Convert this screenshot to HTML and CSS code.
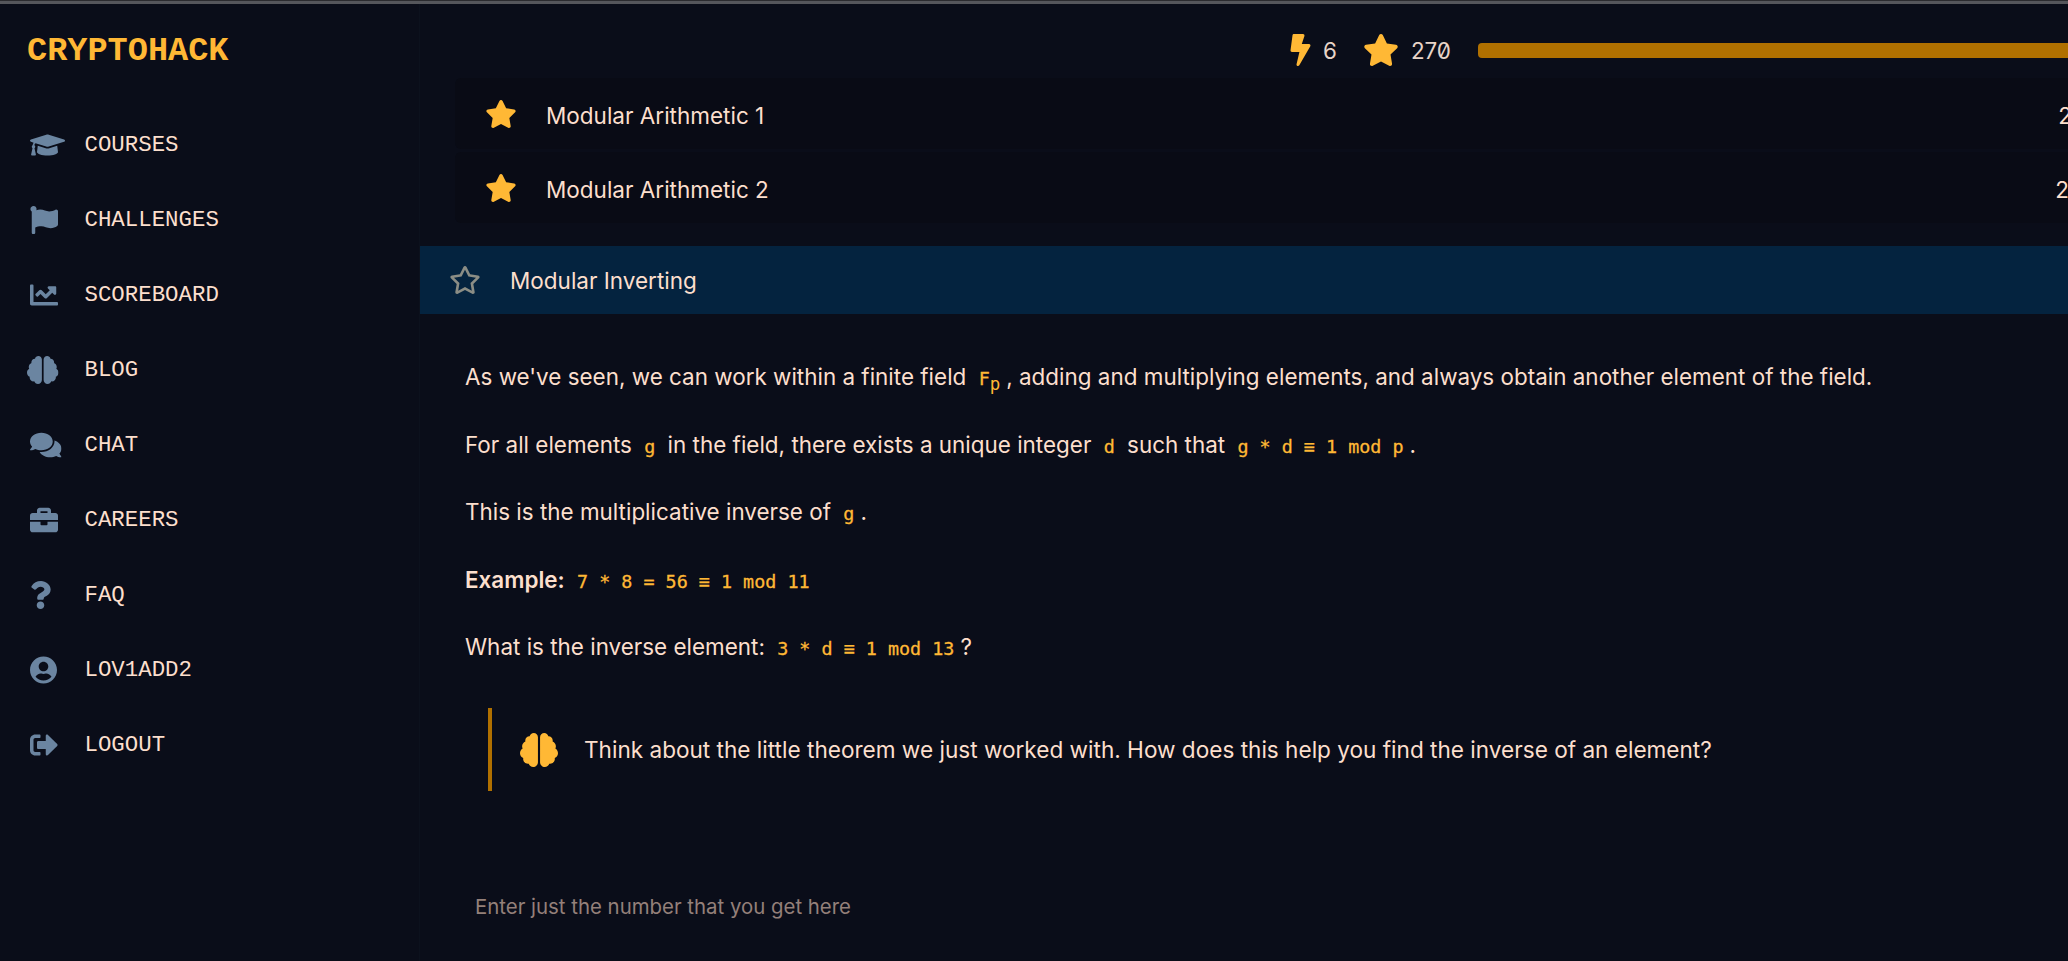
FILE: index.html
```html
<!DOCTYPE html>
<html lang="en">
<head>
<meta charset="utf-8">
<title>CryptoHack</title>
<link rel="stylesheet" href="styles.css">
</head>
<body>
<svg class="sprite" aria-hidden="true">
<symbol id="i-cap" viewBox="0 0 640 512"><path d="M622.34 153.2L343.4 67.5c-15.2-4.67-31.6-4.67-46.79 0L17.66 153.2c-23.54 7.23-23.54 38.36 0 45.59l48.63 14.94c-10.67 13.19-17.23 29.28-17.88 46.9C38.78 266.15 32 276.11 32 288c0 10.78 5.68 19.85 13.86 25.65L20.33 428.53C18.11 438.52 25.71 448 35.94 448h56.11c10.24 0 17.84-9.48 15.62-19.47L82.14 313.65C90.32 307.85 96 298.78 96 288c0-11.57-6.47-21.25-15.66-26.87.76-15.02 8.44-28.3 20.69-36.72L296.6 284.5c9.06 2.78 26.44 6.25 46.79 0l278.95-85.7c23.55-7.24 23.55-38.36 0-45.6zM352.79 315.09c-28.53 8.76-52.84 3.92-65.59 0l-145.02-44.55L128 384c0 35.35 85.96 64 192 64s192-28.65 192-64l-14.18-113.47-145.03 44.56z"/></symbol>
<symbol id="i-flag" viewBox="0 0 512 512"><path d="M349.565 98.783C295.978 98.783 251.721 64 184.348 64c-24.955 0-47.309 4.384-68.045 12.013a55.947 55.947 0 0 0 3.586-23.562C118.117 24.015 94.806 1.206 66.338.048 34.345-1.254 8 24.296 8 56c0 19.026 9.497 35.825 24 45.945V488c0 13.255 10.745 24 24 24h16c13.255 0 24-10.745 24-24v-94.4c28.311-12.064 63.582-22.122 114.435-22.122 53.588 0 97.844 34.783 165.217 34.783 48.169 0 86.667-16.294 122.505-40.858C506.84 359.452 512 349.571 512 339.045v-243.1c0-23.393-24.269-38.87-45.485-29.016-34.338 15.948-76.454 31.854-116.95 31.854z"/></symbol>
<symbol id="i-chart" viewBox="0 0 512 512"><path d="M496 384H64V80c0-8.84-7.16-16-16-16H16C7.16 64 0 71.16 0 80v336c0 17.67 14.33 32 32 32h464c8.84 0 16-7.16 16-16v-32c0-8.84-7.16-16-16-16zM464 96H345.94c-21.38 0-32.09 25.85-16.97 40.97l32.4 32.4L288 242.75l-73.37-73.37c-12.5-12.5-32.76-12.5-45.25 0l-68.69 68.69c-6.25 6.25-6.25 16.38 0 22.63l22.62 22.62c6.25 6.25 16.38 6.25 22.63 0L192 237.25l73.37 73.37c12.5 12.5 32.76 12.5 45.25 0l96-96 32.4 32.4c15.12 15.12 40.97 4.41 40.97-16.97V112c.01-8.84-7.15-16-15.99-16z"/></symbol>
<symbol id="i-brain" viewBox="0 0 576 512"><path d="M208 0c-29.9 0-54.7 20.5-61.8 48.2-.8 0-1.4-.2-2.2-.2-35.3 0-64 28.7-64 64 0 4.8.6 9.5 1.7 14C52.5 138 32 166.6 32 200c0 12.6 3.2 24.3 8.3 34.9C16.3 248.7 0 274.3 0 304c0 33.3 20.4 61.9 49.4 73.9-.9 4.6-1.4 9.3-1.4 14.1 0 39.8 32.2 72 72 72 4.1 0 8.1-.5 12-1.2 9.6 28.5 36.2 49.2 68 49.2 39.8 0 72-32.2 72-72V64c0-35.3-28.7-64-64-64zm368 304c0-29.7-16.3-55.3-40.3-69.1 5.2-10.6 8.3-22.3 8.3-34.9 0-33.4-20.5-62-49.7-74 1-4.5 1.7-9.2 1.7-14 0-35.3-28.7-64-64-64-.8 0-1.5.2-2.2.2C422.7 20.5 397.9 0 368 0c-35.3 0-64 28.6-64 64v376c0 39.8 32.2 72 72 72 31.8 0 58.4-20.7 68-49.2 3.9.7 7.9 1.2 12 1.2 39.8 0 72-32.2 72-72 0-4.8-.5-9.5-1.4-14.1 29-12 49.4-40.6 49.4-73.9z"/></symbol>
<symbol id="i-chat" viewBox="0 0 576 512"><path d="M416 192c0-88.4-93.1-160-208-160S0 103.6 0 192c0 34.3 14.1 65.9 38 92-13.4 30.2-35.5 54.2-35.8 54.5-2.2 2.3-2.8 5.7-1.5 8.7S4.8 352 8 352c36.6 0 66.9-12.3 88.7-25 32.2 15.7 70.3 25 111.3 25 114.9 0 208-71.6 208-160zm122 220c23.9-26 38-57.7 38-92 0-66.9-53.5-124.2-129.3-148.1.9 6.6 1.3 13.3 1.3 20.1 0 105.9-107.7 192-240 192-10.8 0-21.3-.8-31.7-1.9C207.8 439.6 281.8 480 368 480c41 0 79.1-9.2 111.3-25 21.8 12.7 52.1 25 88.7 25 3.2 0 6.1-1.9 7.3-4.8 1.3-2.9.7-6.3-1.5-8.7-.3-.3-22.4-24.2-35.8-54.5z"/></symbol>
<symbol id="i-case" viewBox="0 0 512 512"><path d="M320 336c0 8.84-7.16 16-16 16h-96c-8.84 0-16-7.16-16-16v-48H0v144c0 25.6 22.4 48 48 48h416c25.6 0 48-22.4 48-48V288H320v48zm144-208h-80V80c0-25.6-22.4-48-48-48H176c-25.6 0-48 22.4-48 48v48H48c-25.6 0-48 22.4-48 48v80h512v-80c0-25.6-22.4-48-48-48zm-144 0H192V96h128v32z"/></symbol>
<symbol id="i-question" viewBox="0 0 384 512"><path d="M202.021 0C122.202 0 70.503 32.703 29.914 91.026c-7.363 10.58-5.093 25.086 5.178 32.874l43.138 32.709c10.373 7.865 25.132 6.026 33.253-4.148 25.049-31.381 43.63-49.449 82.757-49.449 30.764 0 68.816 19.799 68.816 49.631 0 22.552-18.617 34.134-48.993 51.164-35.423 19.86-82.299 44.576-82.299 106.405V320c0 13.255 10.745 24 24 24h72.471c13.255 0 24-10.745 24-24v-5.773c0-42.86 125.268-44.645 125.268-160.627C377.504 66.256 286.902 0 202.021 0zM192 373.459c-38.196 0-69.271 31.075-69.271 69.271 0 38.195 31.075 69.27 69.271 69.27s69.271-31.075 69.271-69.271-31.075-69.27-69.271-69.27z"/></symbol>
<symbol id="i-user" viewBox="0 0 496 512"><path d="M248 8C111 8 0 119 0 256s111 248 248 248 248-111 248-248S385 8 248 8zm0 96c48.6 0 88 39.4 88 88s-39.4 88-88 88-88-39.4-88-88 39.4-88 88-88zm0 344c-58.7 0-111.3-26.6-146.5-68.2 18.8-35.4 55.6-59.8 98.5-59.8 2.4 0 4.8.4 7.1 1.1 13 4.2 26.6 6.9 40.9 6.9 14.3 0 28-2.7 40.9-6.9 2.3-.7 4.7-1.1 7.1-1.1 42.9 0 79.7 24.4 98.5 59.8C359.3 421.4 306.7 448 248 448z"/></symbol>
<symbol id="i-out" viewBox="0 0 512 512"><path d="M497 273L329 441c-15 15-41 4.5-41-17v-96H152c-13.3 0-24-10.7-24-24v-96c0-13.3 10.7-24 24-24h136V88c0-21.4 25.9-32 41-17l168 168c9.3 9.4 9.3 24.6 0 34zM192 436v-40c0-6.6-5.4-12-12-12H96c-17.7 0-32-14.3-32-32V160c0-17.7 14.3-32 32-32h84c6.6 0 12-5.4 12-12V76c0-6.6-5.4-12-12-12H96c-53 0-96 43-96 96v192c0 53 43 96 96 96h84c6.6 0 12-5.4 12-12z"/></symbol>
<symbol id="i-bolt" viewBox="0 0 320 512"><path d="M296 160H180.6l42.6-129.8C227.2 15 215.7 0 200 0H56C44 0 33.8 8.9 32.2 20.8l-32 240C-1.7 275.2 9.5 288 24 288h118.7L96.6 482.5c-3.6 15.2 8 29.5 23.3 29.5 8.4 0 16.4-4.4 20.8-12l176-304c9.3-15.9-2.2-36-20.7-36z"/></symbol>
<symbol id="i-star" viewBox="0 0 576 512"><path d="M259.3 17.8L194 150.2 47.9 171.5c-26.2 3.8-36.7 36.1-17.7 54.6l105.7 103-25 145.5c-4.5 26.3 23.2 46 46.4 33.7L288 439.6l130.7 68.7c23.2 12.2 50.9-7.4 46.4-33.7l-25-145.5 105.7-103c19-18.5 8.5-50.8-17.7-54.6L382 150.2 316.7 17.8c-11.7-23.6-45.6-23.9-57.4 0z"/></symbol>
<symbol id="i-star-o" viewBox="0 0 576 512"><path d="M528.1 171.5L382 150.2 316.7 17.8c-11.7-23.6-45.6-23.9-57.4 0L194 150.2 47.9 171.5c-26.2 3.8-36.7 36.1-17.7 54.6l105.7 103-25 145.5c-4.5 26.3 23.2 46 46.4 33.7L288 439.6l130.7 68.7c23.2 12.2 50.9-7.4 46.4-33.7l-25-145.5 105.7-103c19-18.5 8.5-50.8-17.7-54.6zM388.6 312.3l23.7 138.4L288 385.4l-124.3 65.3 23.7-138.4-100.6-98 139-20.2 62.2-126 62.2 126 139 20.2-100.6 98z"/></symbol>
</svg>
<div class="browser-edge"></div>
<div class="app">
  <aside class="sidebar">
    <div class="logo">CRYPTOHACK</div>
    <nav class="nav">
      <a class="nav-item"><span class="nav-icon"><svg class="ic-cap"><use href="#i-cap"/></svg></span>COURSES</a>
      <a class="nav-item"><span class="nav-icon"><svg class="ic-square"><use href="#i-flag"/></svg></span>CHALLENGES</a>
      <a class="nav-item"><span class="nav-icon"><svg class="ic-square"><use href="#i-chart"/></svg></span>SCOREBOARD</a>
      <a class="nav-item"><span class="nav-icon"><svg class="ic-brain"><use href="#i-brain"/></svg></span>BLOG</a>
      <a class="nav-item"><span class="nav-icon"><svg class="ic-wide"><use href="#i-chat"/></svg></span>CHAT</a>
      <a class="nav-item"><span class="nav-icon"><svg class="ic-square"><use href="#i-case"/></svg></span>CAREERS</a>
      <a class="nav-item"><span class="nav-icon"><svg class="ic-q"><use href="#i-question"/></svg></span>FAQ</a>
      <a class="nav-item"><span class="nav-icon"><svg class="ic-user"><use href="#i-user"/></svg></span>LOV1ADD2</a>
      <a class="nav-item"><span class="nav-icon"><svg class="ic-square"><use href="#i-out"/></svg></span>LOGOUT</a>
    </nav>
  </aside>
  <main class="main">
    <header class="topbar">
      <svg class="bolt"><use href="#i-bolt"/></svg>
      <span class="stat stat-streak">6</span>
      <svg class="top-star"><use href="#i-star"/></svg>
      <span class="stat">270</span>
      <div class="progress"></div>
    </header>
    <section class="rows">
      <div class="row">
        <svg class="row-star"><use href="#i-star"/></svg>
        <span class="row-title">Modular Arithmetic 1</span>
        <span class="row-score">2</span>
      </div>
      <div class="row">
        <svg class="row-star"><use href="#i-star"/></svg>
        <span class="row-title">Modular Arithmetic 2</span>
        <span class="row-score row-score-wide">2</span>
      </div>
    </section>
    <div class="active-row">
      <svg class="active-star"><use href="#i-star-o"/></svg>
      <span>Modular Inverting</span>
    </div>
    <article class="body">
      <p>As we've seen, we can work within a finite field <code>F<sub>p</sub></code>, adding and multiplying elements, and always obtain another element of the field.</p>
      <p>For all elements <code>g</code> in the field, there exists a unique integer <code>d</code> such that <code>g * d ≡ 1 mod p</code>.</p>
      <p>This is the multiplicative inverse of <code>g</code>.</p>
      <p><strong>Example:</strong> <code>7 * 8 = 56 ≡ 1 mod 11</code></p>
      <p>What is the inverse element: <code>3 * d ≡ 1 mod 13</code>?</p>
      <blockquote class="hint">
        <svg class="hint-brain"><use href="#i-brain"/></svg>
        <span>Think about the little theorem we just worked with. How does this help you find the inverse of an element?</span>
      </blockquote>
      <div class="answer">Enter just the number that you get here</div>
    </article>
  </main>
</div>
</body>
</html>
```
FILE: styles.css
```css
* { box-sizing: border-box; }
html, body { height: 100%; }
body {
  margin: 0;
  background: #0a0d19;
  color: #fcdfcd;
  font-family: "Inter", "Liberation Sans", sans-serif;
  font-size: 22.5px;
  overflow: hidden;
}
.sprite { display: none; }
svg { fill: currentColor; display: block; flex: none; }
.browser-edge { height: 4px; background: #55565b; border-top: 1px solid #2b2b2f; }
.app { display: flex; height: 957px; }

.sidebar { width: 420px; flex: none; border-right: 1px solid #0c111d; }
.logo {
  font-family: "Liberation Mono", monospace;
  font-weight: 700;
  font-size: 33.6px;
  line-height: 40px;
  color: #ffb835;
  padding: 27px 0 0 27px;
}
.nav { margin-top: 36px; padding-left: 30px; }
.nav-item {
  display: flex;
  align-items: center;
  height: 75px;
  font-family: "Liberation Mono", monospace;
  font-size: 22.4px;
}
.nav-icon { width: 54.5px; flex: none; color: #6b85a1; }
.ic-cap { width: 35px; height: 28px; }
.ic-square { width: 28px; height: 28px; }
.ic-brain { width: 31.5px; height: 28px; margin-left: -3px; }
.ic-wide { width: 31.5px; height: 28px; }
.ic-q { width: 21px; height: 28px; }
.ic-user { width: 27px; height: 28px; }

.main { flex: 1; min-width: 0; overflow: hidden; }
.topbar { display: flex; align-items: center; height: 74px; padding: 18px 0 0 870px; white-space: nowrap; }
.bolt { width: 21px; height: 32px; color: #ffb835; }
.top-star { width: 36px; height: 32px; color: #ffb835; margin-right: 12px; }
.stat { font-size: 22.4px; color: #e8d4c8; font-feature-settings: "zero"; }
.stat-streak { margin: 0 26px 0 12px; }
.progress { width: 700px; height: 15px; margin-left: 27px; flex: none; background: #b07000; border-radius: 4px; }

.rows { padding-left: 35px; }
.row {
  display: flex;
  align-items: center;
  height: 71px;
  margin-bottom: 3px;
  padding-left: 30px;
  background: #090b15;
  border-radius: 6px 0 0 6px;
}
.row:last-child { margin-bottom: 0; }
.row-star { width: 32px; height: 28px; color: #ffb835; margin-right: 29px; }
.row-title { flex: 1; padding-top: 3px; }
.row-score { margin-right: -4px; padding-top: 3px; }
.row-score-wide { margin-right: -1px; }

.active-row {
  display: flex;
  align-items: center;
  height: 68px;
  margin-top: 23px;
  padding-left: 29px;
  background: #04233f;
}
.active-star { width: 32px; height: 28px; color: #8b8d85; margin-right: 29px; }

.body { padding: 46px 0 0 45px; }
.body p { margin: 0 0 33.5px; font-size: 22.45px; line-height: 34px; white-space: nowrap; }
strong { font-weight: 600; }
code {
  font-family: "DejaVu Sans Mono", monospace;
  font-size: 18.4px;
  line-height: 1;
  -webkit-text-stroke: 0.3px #ffb835;
  color: #ffb835;
  padding: 0 6px;
}
sub { line-height: 0; font-size: 0.95em; -webkit-text-stroke: 0; }
.hint {
  display: flex;
  align-items: center;
  gap: 26px;
  height: 83px;
  margin: 44px 0 0 23px;
  padding-left: 28px;
  border-left: 4px solid #b07000;
  font-size: 22.58px;
}
.hint-brain { width: 38px; height: 34px; color: #ffb835; }
.answer { margin-top: 103px; padding-left: 10px; font-size: 20.4px; color: #94807a; }
```
